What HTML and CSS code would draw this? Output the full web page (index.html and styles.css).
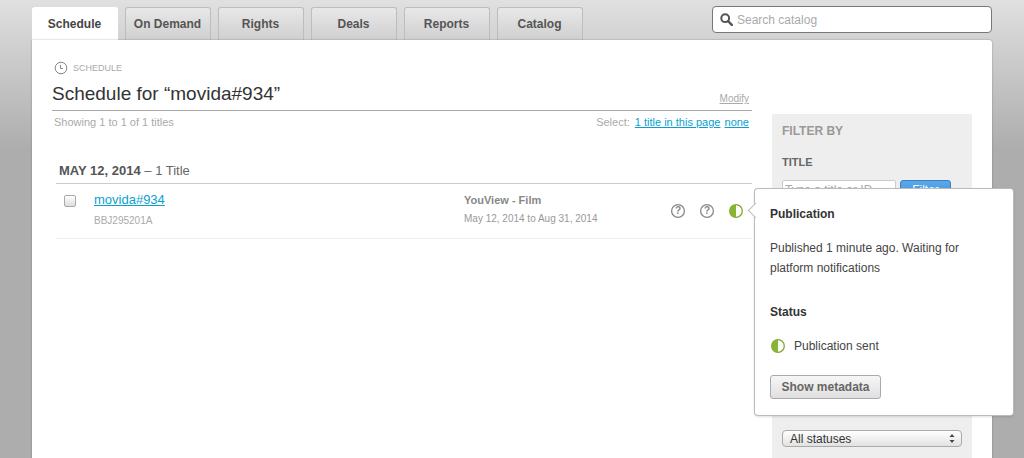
FILE: index.html
```html
<!DOCTYPE html>
<html lang="en">
<head>
<meta charset="utf-8">
<title>Schedule</title>
<link rel="stylesheet" href="styles.css">
</head>
<body>
<div class="page">
  <header class="topbar">
    <nav class="tabs">
      <a class="tab active">Schedule</a>
      <a class="tab">On Demand</a>
      <a class="tab">Rights</a>
      <a class="tab">Deals</a>
      <a class="tab">Reports</a>
      <a class="tab">Catalog</a>
    </nav>
    <div class="search">
      <svg class="search-icon" width="13" height="13" viewBox="0 0 13 13"><circle cx="5.2" cy="5.2" r="3.9" fill="none" stroke="#555" stroke-width="2"/><path d="M8 8l3.8 3.8" stroke="#555" stroke-width="2.4" stroke-linecap="round"/></svg>
      <span>Search catalog</span>
    </div>
  </header>
  <main class="panel">
    <section class="content">
      <div class="crumb">
        <svg width="14" height="14" viewBox="0 0 14 14"><circle cx="7" cy="7" r="5.8" fill="none" stroke="#888" stroke-width="1"/><path d="M6.5 4v3.5h2.5" fill="none" stroke="#888" stroke-width="1"/></svg>
        <span>SCHEDULE</span>
      </div>
      <div class="title-row">
        <h1>Schedule for “movida#934”</h1>
        <a class="modify">Modify</a>
      </div>
      <div class="meta-row">
        <span>Showing 1 to 1 of 1 titles</span>
        <span class="select-links">Select: <a class="link-page">1 title in this page</a> <a class="link-none">none</a></span>
      </div>
      <h2 class="date"><b>MAY 12, 2014</b> – 1 Title</h2>
      <div class="row">
        <input class="check" type="checkbox">
        <div class="row-title">
          <a class="title-link">movida#934</a>
          <span class="code">BBJ295201A</span>
        </div>
        <div class="row-platform">
          <b>YouView - Film</b>
          <span>May 12, 2014 to Aug 31, 2014</span>
        </div>
        <div class="row-icons">
          <svg class="q" width="16" height="16" viewBox="0 0 16 16"><circle cx="8" cy="8" r="6.4" fill="none" stroke="#888" stroke-width="1.3"/><text x="8" y="11.4" text-anchor="middle" class="q-mark">?</text></svg>
          <svg class="q" width="16" height="16" viewBox="0 0 16 16"><circle cx="8" cy="8" r="6.4" fill="none" stroke="#888" stroke-width="1.3"/><text x="8" y="11.4" text-anchor="middle" class="q-mark">?</text></svg>
          <svg class="half" width="16" height="16" viewBox="0 0 16 16"><circle cx="8" cy="8" r="6.3" fill="#fff" stroke="#7fa82e" stroke-width="1.3"/><path d="M8 1.7a6.3 6.3 0 0 0 0 12.6z" fill="#8ab534"/></svg>
        </div>
      </div>
    </section>
    <aside class="sidebar">
      <h3 class="filter-by">FILTER BY</h3>
      <h4 class="filter-title">TITLE</h4>
      <div class="filter-line">
        <input class="filter-input" placeholder="Type a title or ID">
        <button class="filter-btn">Filter</button>
      </div>
      <div class="status-select">
        <span>All statuses</span>
        <svg width="6" height="9" viewBox="0 0 6 9"><path d="M3 0l2.5 3h-5zM3 9L.5 6h5z" fill="#444"/></svg>
      </div>
    </aside>
    <div class="popover">
      <span class="arrow"></span>
      <h5>Publication</h5>
      <p>Published 1 minute ago. Waiting for platform notifications</p>
      <h5 class="status-head">Status</h5>
      <div class="status-line">
        <svg width="16" height="16" viewBox="0 0 16 16"><circle cx="8" cy="8" r="6.3" fill="#fff" stroke="#7fa82e" stroke-width="1.3"/><path d="M8 1.7a6.3 6.3 0 0 0 0 12.6z" fill="#8ab534"/></svg>
        <span>Publication sent</span>
      </div>
      <button class="meta-btn">Show metadata</button>
    </div>
  </main>
</div>
</body>
</html>
```
FILE: styles.css
```css
* { box-sizing: border-box; }
html, body { margin: 0; height: 458px; overflow: hidden; }
body {
  font-family: "Liberation Sans", Arial, sans-serif;
  background: linear-gradient(#e0e0e0 0, #d2d2d2 40px, #adadad 150px, #adadad 100%);
}
.page { padding: 6px 32px 0; width: 1024px; }
.topbar { display: flex; justify-content: space-between; align-items: flex-start; height: 34px; }
.tabs { display: flex; gap: 7px; padding-top: 1px; }
.tab {
  width: 86px; height: 33px; padding-right: 1px; display: flex; align-items: center; justify-content: center;
  font-size: 12px; font-weight: bold; color: #555;
  background: linear-gradient(#e8e8e8, #cfcfcf);
  border: 1px solid #bdbdbd; border-bottom: 0; border-radius: 3px 3px 0 0;
}
.tab.active { background: #fff; color: #444; border-color: #fff; }
.search {
  width: 280px; height: 27px; background: #fff; border: 1px solid #777; border-radius: 4px;
  display: flex; align-items: center; gap: 4px; padding-left: 7px;
  font-size: 12px; color: #aaa;
}
.search-icon { flex: none; }
.panel {
  position: relative; display: flex; width: 960px; height: 500px; padding-left: 20px;
  background: #fff; border-radius: 0 3px 0 0;
  box-shadow: 0 0 2px rgba(0,0,0,.35);
}
.content { width: 700px; flex: none; }
.crumb { display: flex; align-items: center; gap: 5px; padding: 20px 0 0 2px; height: 35px; font-size: 9px; color: #aaa; }
.title-row { display: flex; justify-content: space-between; align-items: flex-end; height: 36px; border-bottom: 1px solid #aaa; padding-bottom: 4px; }
h1 { margin: 0; font-size: 19px; line-height: 24px; font-weight: normal; color: #333; }
.modify { font-size: 10px; line-height: 12px; margin: 0 3px 1px 0; color: #aaa; text-decoration: underline; }
.meta-row { display: flex; justify-content: space-between; padding: 5px 3px 0 2px; font-size: 11px; line-height: 13px; color: #aaa; }
.select-links a { color: #0a9fd0; text-decoration: underline; }
.link-page { margin-left: 2px; }
.link-none { margin-left: 1px; }
.date { margin: 33px 0 0 4px; padding: 0 0 3px 3px; font-size: 13px; line-height: 18px; font-weight: normal; color: #666; border-bottom: 1px solid #ccc; }
.date b { color: #555; }
.row { display: flex; margin-left: 4px; height: 55px; border-bottom: 1px solid #eee; position: relative; }
.check {
  appearance: none; width: 12px; height: 12px; margin: 11px 0 0 8px; flex: none;
  border: 1px solid #aaa; border-radius: 2px; background: linear-gradient(#fff, #ddd);
}
.row-title { width: 370px; margin-left: 18px; flex: none; display: flex; flex-direction: column; }
.title-link { font-size: 13px; line-height: 16px; margin-top: 8px; color: #0a9fd0; text-decoration: underline; }
.code { font-size: 10px; line-height: 12px; margin-top: 7px; color: #aaa; }
.row-platform { width: 200px; flex: none; display: flex; flex-direction: column; font-size: 10px; color: #999; }
.row-platform b { font-size: 11px; line-height: 14px; margin-top: 9px; color: #888; }
.row-platform span { line-height: 12px; margin-top: 6px; }
.row-icons { display: flex; gap: 13px; position: absolute; left: 614px; top: 19px; }
.q-mark { font: bold 10px "Liberation Sans", Arial, sans-serif; fill: #888; }
.sidebar {
  margin: 74px 0 0 20px; width: 200px; flex: none; height: 430px;
  background: #eee; padding: 10px 10px 0;
}
.filter-by { margin: 0; font-size: 12px; line-height: 14px; color: #999; }
.filter-title { margin: 17px 0 0; font-size: 11px; line-height: 14px; color: #666; }
.filter-line { display: flex; margin-top: 11px; align-items: flex-start; gap: 4px; }
.filter-input { width: 114px; height: 22px; border: 1px solid #ccc; border-radius: 2px; padding: 0 2px 3px; font: 12px "Liberation Sans", Arial, sans-serif; background: #fff; }
.filter-input::placeholder { color: #aaa; }
.filter-btn { width: 51px; height: 22px; padding: 0 0 3px; border: 1px solid #3a7fc0; border-radius: 3px; background: linear-gradient(#5aa8ea, #3c8edc); color: #fff; font: 12px "Liberation Sans", Arial, sans-serif; }
.status-select {
  margin-top: 228px; width: 180px; height: 17px; padding: 0 6px 0 7px;
  display: flex; align-items: center; justify-content: space-between;
  font-size: 12px; color: #333;
  border: 1px solid #aaa; border-radius: 4px; background: linear-gradient(#fff, #e2e2e2);
}
.popover {
  position: absolute; left: 723px; top: 149px; width: 258px; height: 226px; padding: 17px 15px 0;
  background: #fff; border-radius: 3px; box-shadow: 0 0 0 1px #bbb, 0 1px 3px rgba(0,0,0,.25);
}
.arrow {
  position: absolute; left: -5px; top: 16px; width: 11px; height: 11px; background: #fff;
  border-left: 1px solid #bbb; border-bottom: 1px solid #bbb; transform: rotate(45deg);
}
h5 { margin: 0; font-size: 12px; line-height: 16px; color: #333; }
.popover p { margin: 16px 0 0; font-size: 12px; line-height: 20px; color: #444; }
.status-head { margin-top: 26px; }
.status-line { display: flex; align-items: center; gap: 8px; margin-top: 18px; font-size: 12px; color: #444; }
.meta-btn {
  margin-top: 21px; display: block; width: 111px; height: 24px; padding: 0;
  font: bold 12px "Liberation Sans", Arial, sans-serif; color: #666;
  border: 1px solid #aaa; border-radius: 3px; background: linear-gradient(#f6f6f6, #e0e0e0);
}
```
